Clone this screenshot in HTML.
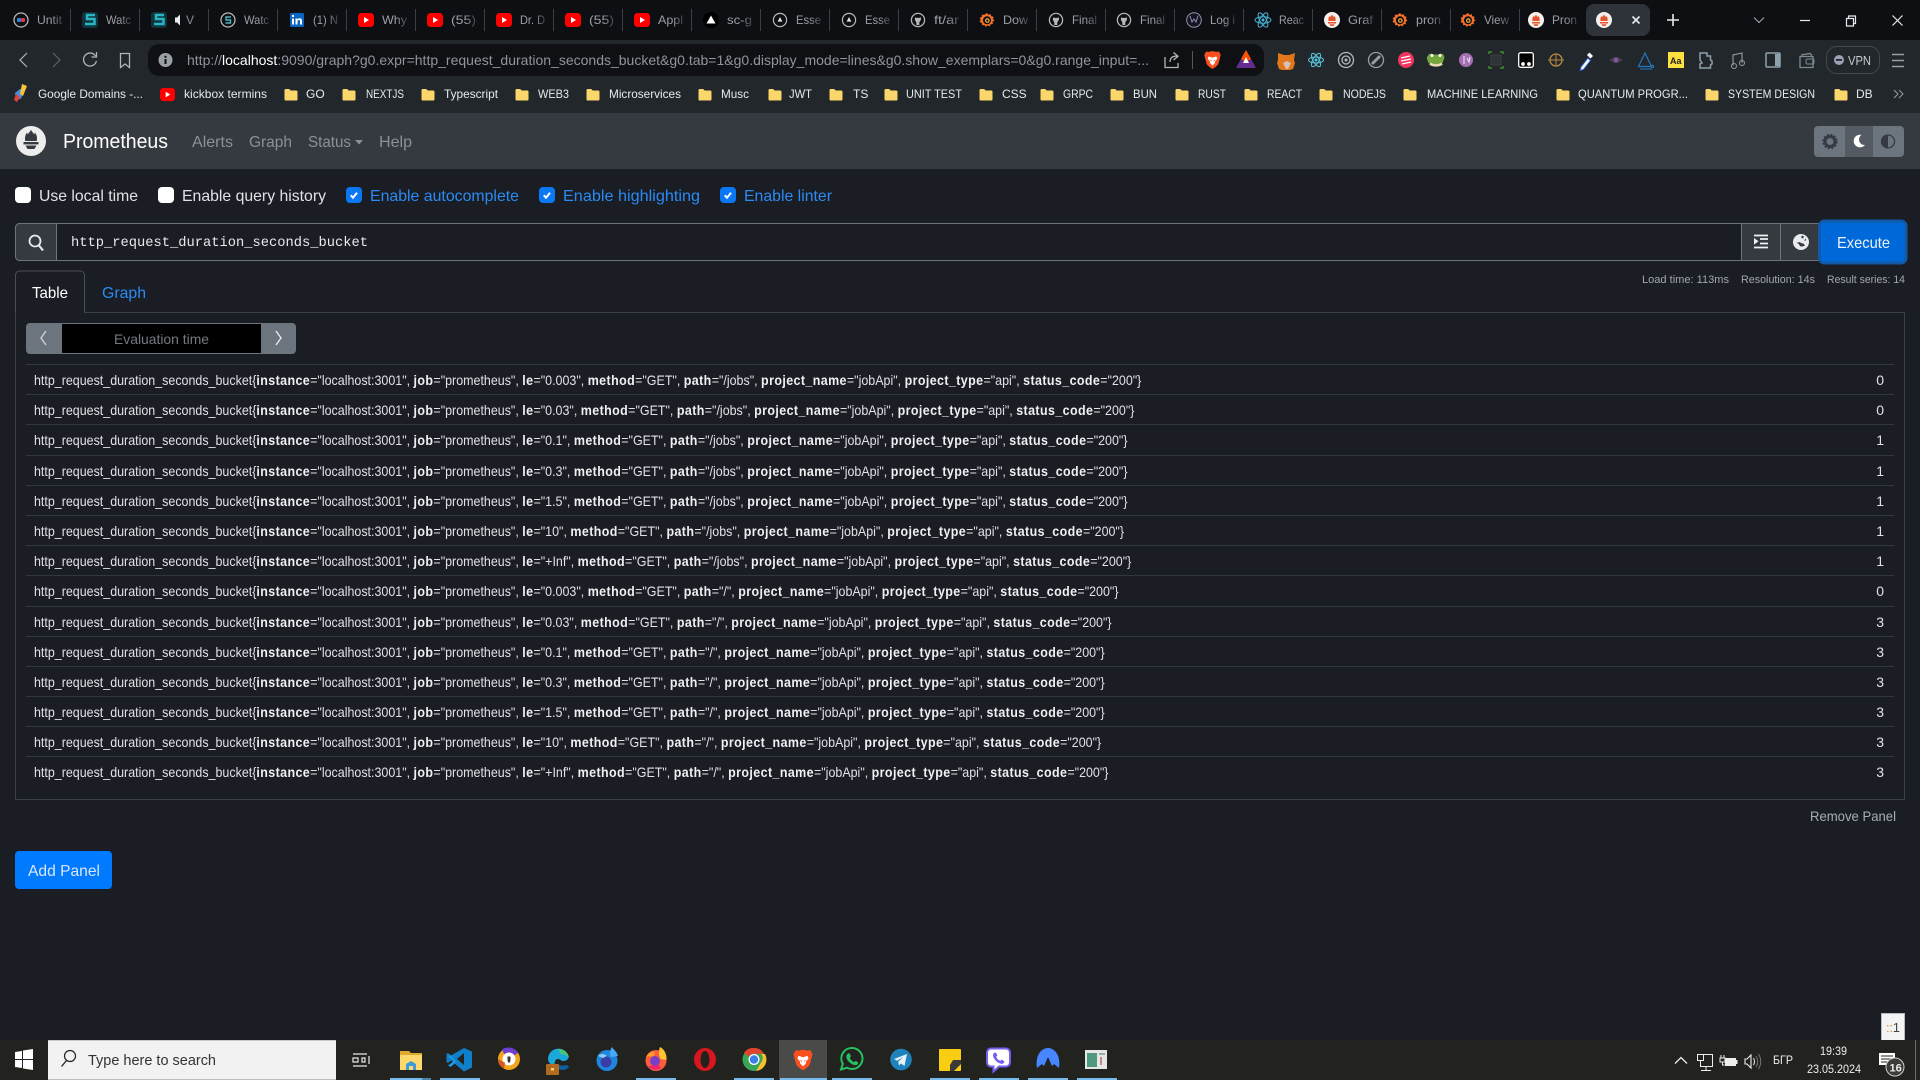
<!DOCTYPE html>
<html lang="en"><head><meta charset="utf-8"><title>Prometheus Time Series Collection and Processing Server</title>
<style>
html,body{margin:0;padding:0;background:#1a1d23;width:1920px;height:1080px;overflow:hidden;font-family:"Liberation Sans",sans-serif}
#s{position:absolute;left:0;top:0}
#rows{position:absolute;left:26px;top:364px;width:1868px;font-size:14px;color:#dfe2e6;line-height:30px}
.r{position:absolute;left:0;width:1868px;height:30px;border-top:1px solid #32373d;white-space:nowrap;box-sizing:border-box}
.r span{position:absolute;left:8px;top:0;transform:scaleX(.89);transform-origin:0 0}
.r i{position:absolute;right:10px;top:0;font-style:normal}
.r b{color:#eef0f2;letter-spacing:.45px}
text{font-family:"Liberation Sans",sans-serif}
.tab{font-size:12px;fill:url(#fade)}.bm{font-size:12px;fill:#e8eaed}
.lab{font-size:16px}.nav{font-size:16px;fill:#8d9095}
</style></head><body>
<svg id="s" width="1920" height="1080" viewBox="0 0 1920 1080" xmlns="http://www.w3.org/2000/svg">
<defs>
<linearGradient id="fade" x1="0" x2="1" y1="0" y2="0"><stop offset="0" stop-color="#9aa0a6"/><stop offset=".55" stop-color="#9aa0a6"/><stop offset="1" stop-color="#3a3d42"/></linearGradient>
<symbol id="yt" viewBox="0 0 16 16"><rect x="0" y="1" width="16" height="14" rx="3.5" fill="#f00"/><path d="M6 5l5 3-5 3z" fill="#fff"/></symbol>
<symbol id="gh" viewBox="0 0 16 16"><circle cx="8" cy="8" r="6.6" fill="none" stroke="#b5b8bb" stroke-width="1.3"/><path d="M5.2 5.2l1.3.7h3l1.3-.7.2 2.6-1.2 1.7-.5 1v2.5h-3v-2.5l-.5-1-1-1.7z" fill="#b5b8bb"/></symbol>
<symbol id="ac" viewBox="0 0 16 16"><circle cx="8" cy="8" r="6.6" fill="none" stroke="#b5b8bb" stroke-width="1.2"/><path d="M8 5l2.4 4.6H5.6z" fill="#dfe1e3"/></symbol>
<symbol id="graf" viewBox="0 0 16 16"><path d="M8 1l1.5 1.8 2.2-.7.6 2.2 2.3.4-.6 2.3L15.500 8.500l-1.900 1.300.3 2.300-2.300.2-1 2.100-2.100-1-1.800 1.500-1.300-1.900-2.300.3-.2-2.300L.5 10l1.100-2L.7 5.900l2.100-1 .1-2.300 2.300.3z" fill="#f46f2a"/><circle cx="8" cy="8.300" r="4" fill="#0d0f13"/><circle cx="8.300" cy="8.600" r="2.300" fill="#fbb03b"/><circle cx="8.300" cy="8.600" r="1.100" fill="#0d0f13"/></symbol>
<symbol id="prom" viewBox="0 0 16 16"><circle cx="8" cy="8" r="8" fill="#f5f0ec"/><path d="M8 2.200c.5 1.800 1.200 1.500 1.800 3 .4-.5.5-1 .6-1.300 1 1.300 1.600 3.200 1.100 5.100H4.500c-.5-1.900.1-3.800 1.100-5.100.1.400.3.900.6 1.300C6.800 3.700 7.500 4 8 2.200z" fill="#e6522c"/><rect x="4" y="10" width="8" height="1.500" fill="#e6522c"/><path d="M5.500 12.200h5L9.500 14h-3z" fill="#e6522c"/></symbol>
<symbol id="brave" viewBox="0 0 24 24"><path d="M12 .8l5 1 3-.6 2.400 4.400-1.100 4.300-2 7.200c-1.500 2.500-4.800 5-7.300 6.100-2.500-1.100-5.800-3.600-7.300-6.100l-2-7.200L1.600 5.600 4 1.200l3 .6z" fill="#f9501f"/><path d="M7 7.500l3 .8 2 .8 2-.8 3-.8 1 3-2.700 3.200-.3 2.300L12 19l-3-3-.3-2.300L6 10.500z" fill="#fff"/><path d="M10.500 12.500l-2-1 2 3zM13.500 12.500l2-1-2 3z" fill="#f9501f"/></symbol>
<symbol id="fold" viewBox="0 0 14 13"><path d="M.5 2.200C.5 1.400 1 1 1.700 1h3.500l1.500 1.500h5.500c.8 0 1.300.5 1.300 1.200v7.500c0 .8-.5 1.300-1.300 1.300H1.700C1 12.500.5 12 .5 11.200z" fill="#fbd66b"/></symbol>
<symbol id="chk" viewBox="0 0 16 16"><rect width="16" height="16" rx="4" fill="#0a78f5"/><path d="M4.800 8.300l2.200 2.400 4-5" stroke="#fff" stroke-width="2" fill="none"/></symbol>
</defs>

<!-- tab strip -->
<rect width="1920" height="40" fill="#0d0f13"/>
<g stroke="#3a3d42" stroke-width="1">
<path d="M70.500 9v22M139.500 9v22M208.500 9v22M277.500 9v22M346.500 9v22M415.500 9v22M484.500 9v22M553.500 9v22M622.500 9v22M691.500 9v22M760.500 9v22M829.500 9v22M898.500 9v22M967.500 9v22M1036.500 9v22M1105.500 9v22M1174.500 9v22M1243.500 9v22M1312.500 9v22M1381.500 9v22M1450.500 9v22M1519.500 9v22"/>
</g>
<circle cx="21" cy="20" r="7" fill="none" stroke="#b5b8bb" stroke-width="1.300"/><rect x="17" y="18" width="4" height="4" rx="1" fill="#2288d8"/><rect x="21" y="18" width="4" height="4" rx="1" fill="#e2334b"/>
<text class="tab" x="37" y="24" textLength="25" lengthAdjust="spacingAndGlyphs">Untit</text>
<rect x="82" y="12" width="16" height="16" rx="3" fill="#11333c"/><path d="M95 15H87v4h7.500v5H85" fill="none" stroke="#27b7c4" stroke-width="2.500"/>
<text class="tab" x="106" y="24" textLength="25" lengthAdjust="spacingAndGlyphs">Watc</text>
<rect x="151" y="12" width="16" height="16" rx="3" fill="#11333c"/><path d="M164 15h-8v4h7.500v5H154" fill="none" stroke="#27b7c4" stroke-width="2.500"/>
<path d="M175 17.500h2l3-3v11l-3-3h-2z" fill="#e8eaed"/><text x="186" y="24" font-size="12" fill="#8a8f95">V</text>
<circle cx="228" cy="20" r="7" fill="none" stroke="#b5b8bb" stroke-width="1.300"/><path d="M231 17h-5v3h4.500v3h-5" fill="none" stroke="#4ab4c2" stroke-width="1.400"/>
<text class="tab" x="244" y="24" textLength="25" lengthAdjust="spacingAndGlyphs">Watc</text>
<rect x="290" y="13" width="14" height="14" rx="1.500" fill="#0a66c2"/><path d="M292 18.500h2v6h-2zM292 15h2v2h-2zM295.500 18.500h2v1c.5-.8 1.200-1.200 2.200-1.200 1.800 0 2.300 1.200 2.300 3v3.200h-2v-3c0-.9-.2-1.500-1-1.500s-1.500.6-1.500 1.600v2.900h-2z" fill="#fff"/>
<text class="tab" x="313" y="24" textLength="25" lengthAdjust="spacingAndGlyphs">(1) N</text>
<use href="#yt" x="358" y="12" width="16" height="16"/><text class="tab" x="382" y="24" textLength="25" lengthAdjust="spacingAndGlyphs">Why</text>
<use href="#yt" x="427" y="12" width="16" height="16"/><text class="tab" x="451" y="24" textLength="25" lengthAdjust="spacingAndGlyphs">(55)</text>
<use href="#yt" x="496" y="12" width="16" height="16"/><text class="tab" x="520" y="24" textLength="25" lengthAdjust="spacingAndGlyphs">Dr. D</text>
<use href="#yt" x="565" y="12" width="16" height="16"/><text class="tab" x="589" y="24" textLength="25" lengthAdjust="spacingAndGlyphs">(55)</text>
<use href="#yt" x="634" y="12" width="16" height="16"/><text class="tab" x="658" y="24" textLength="25" lengthAdjust="spacingAndGlyphs">Appl</text>
<circle cx="711" cy="20" r="8" fill="#000"/><path d="M711 15.500l4.500 8h-9z" fill="#fff"/><text class="tab" x="727" y="24" textLength="25" lengthAdjust="spacingAndGlyphs">sc-g</text>
<use href="#ac" x="772" y="12" width="16" height="16"/><text class="tab" x="796" y="24" textLength="25" lengthAdjust="spacingAndGlyphs">Esse</text>
<use href="#ac" x="841" y="12" width="16" height="16"/><text class="tab" x="865" y="24" textLength="25" lengthAdjust="spacingAndGlyphs">Esse</text>
<use href="#gh" x="910" y="12" width="16" height="16"/><text class="tab" x="934" y="24" textLength="25" lengthAdjust="spacingAndGlyphs">ft/ar</text>
<use href="#graf" x="979" y="12" width="16" height="16"/><text class="tab" x="1003" y="24" textLength="25" lengthAdjust="spacingAndGlyphs">Dow</text>
<use href="#gh" x="1048" y="12" width="16" height="16"/><text class="tab" x="1072" y="24" textLength="25" lengthAdjust="spacingAndGlyphs">Final</text>
<use href="#gh" x="1116" y="12" width="16" height="16"/><text class="tab" x="1140" y="24" textLength="25" lengthAdjust="spacingAndGlyphs">Final</text>
<circle cx="1194" cy="20" r="7.300" fill="#141425" stroke="#8f93a8" stroke-width="1"/><path d="M1190 16l2 6 2-3 2 3 2-6" stroke="#8f93a8" fill="none"/>
<text class="tab" x="1210" y="24" textLength="25" lengthAdjust="spacingAndGlyphs">Log i</text>
<g fill="none" stroke="#4ab6d8" stroke-width="1"><ellipse cx="1263" cy="20" rx="8" ry="3.200"/><ellipse cx="1263" cy="20" rx="8" ry="3.200" transform="rotate(60 1263 20)"/><ellipse cx="1263" cy="20" rx="8" ry="3.200" transform="rotate(120 1263 20)"/></g><circle cx="1263" cy="20" r="1.500" fill="#4ab6d8"/>
<text class="tab" x="1279" y="24" textLength="25" lengthAdjust="spacingAndGlyphs">Reac</text>
<use href="#prom" x="1324" y="12" width="16" height="16"/><text class="tab" x="1348" y="24" textLength="25" lengthAdjust="spacingAndGlyphs">Graf</text>
<use href="#graf" x="1392" y="12" width="16" height="16"/><text class="tab" x="1416" y="24" textLength="25" lengthAdjust="spacingAndGlyphs">pron</text>
<use href="#graf" x="1460" y="12" width="16" height="16"/><text class="tab" x="1484" y="24" textLength="25" lengthAdjust="spacingAndGlyphs">View</text>
<use href="#prom" x="1528" y="12" width="16" height="16"/><text class="tab" x="1552" y="24" textLength="25" lengthAdjust="spacingAndGlyphs">Pron</text>
<rect x="1586" y="4" width="64" height="32" rx="8" fill="#2d3338"/>
<use href="#prom" x="1596" y="12" width="16" height="16"/>
<path d="M1632.500 16.500l7 7m0-7l-7 7" stroke="#e8eaed" stroke-width="1.600"/>
<path d="M1673 14v12M1667 20h12" stroke="#e8eaed" stroke-width="1.600"/>
<path d="M1754 17.500l5 5 5-5" stroke="#a8abaf" fill="none"/>
<path d="M1800 20.500h10" stroke="#e8eaed" stroke-width="1.200"/>
<path d="M1846.500 18.500h7v7.500h-7zM1848.500 18.500V16h7v7.500h-2" stroke="#e8eaed" fill="none" stroke-width="1.200"/>
<path d="M1892.500 15.500l10 10m0-10l-10 10" stroke="#e8eaed" stroke-width="1.200"/>

<!-- toolbar -->
<rect y="40" width="1920" height="73" fill="#22272b"/>
<rect x="148" y="44" width="1116" height="32" rx="11" fill="#0e1014"/>
<path d="M27 53l-7 7 7 7" stroke="#b2b5b8" fill="none" stroke-width="1.200"/>
<path d="M53 53l7 7-7 7" stroke="#5f6367" fill="none" stroke-width="1.200"/>
<path d="M95.500 56a6.500 6.500 0 1 0 .9 5" stroke="#b2b5b8" fill="none" stroke-width="1.300"/><path d="M96.500 52v5h-5" stroke="#b2b5b8" fill="none" stroke-width="1.300"/>
<path d="M120.500 53.500h9v14l-4.500-3.500-4.500 3.500z" stroke="#b2b5b8" fill="none" stroke-width="1.300"/>
<circle cx="165.500" cy="60" r="7" fill="#9aa0a6"/><rect x="164.500" y="59" width="2" height="5" fill="#0e1014"/><rect x="164.500" y="55.800" width="2" height="2" fill="#0e1014"/>
<text x="187" y="65" font-size="14" fill="#8f959b" textLength="962" lengthAdjust="spacingAndGlyphs">http://<tspan fill="#fff">localhost</tspan>:9090/graph?g0.expr=http_request_duration_seconds_bucket&amp;g0.tab=1&amp;g0.display_mode=lines&amp;g0.show_exemplars=0&amp;g0.range_input=...</text>
<path d="M1165 57v10.500h13V63M1170 62c0-4 2.500-6 7-6M1173.500 52.500l4.500 3.800-4.500 3.700" stroke="#b2b5b8" fill="none" stroke-width="1.300"/>
<path d="M1192.500 51v18" stroke="#55595d"/>
<use href="#brave" x="1203" y="50" width="19" height="20"/>
<path d="M1246 50l10 18h-20z" fill="#662d91"/><path d="M1246 50l5 9-5 3-5-3z" fill="#ff5000"/><path d="M1246 57l3 6h-6z" fill="#fff"/>
<!-- extensions -->
<path d="M1278 53l6 2h5l6-2-1 7 1 3-2 6-3 1h-8l-3-1-2-6 1-3z" fill="#e2761b"/><path d="M1283 63l3 6h2l3-6-4-2z" fill="#d7c1b3"/>
<rect x="1308" y="52" width="16" height="16" fill="#262a30"/><g fill="none" stroke="#58c4dc"><ellipse cx="1316" cy="60" rx="7.500" ry="3"/><ellipse cx="1316" cy="60" rx="7.500" ry="3" transform="rotate(60 1316 60)"/><ellipse cx="1316" cy="60" rx="7.500" ry="3" transform="rotate(120 1316 60)"/></g><circle cx="1316" cy="60" r="1.500" fill="#58c4dc"/>
<circle cx="1346" cy="60" r="7.500" fill="none" stroke="#b5b8bb" stroke-width="1.300"/><circle cx="1346" cy="60" r="4" fill="none" stroke="#b5b8bb" stroke-width="1.300"/><circle cx="1346" cy="60" r="1.500" fill="#b5b8bb"/>
<circle cx="1376" cy="60" r="7.500" fill="none" stroke="#9a9da0" stroke-width="1.300"/><path d="M1372 64l8-8" stroke="#9a9da0" stroke-width="3"/>
<circle cx="1406" cy="60" r="8" fill="#f1345f"/><path d="M1401 58l9-2M1401 61l10-2M1402 64l9-2" stroke="#fff" stroke-width="1.300"/>
<path d="M1428 56a3 3 0 0 1 5-1.500h6a3 3 0 0 1 5 1.500c.6 1 .4 3-.5 4l-.5 2c-2 4-13 4-15 0l-.5-2c-.9-1-1.100-3 .5-4z" fill="#74a63c"/><path d="M1430 63.500c3 2.500 9 2.500 12 0" stroke="#e9d9b5" stroke-width="2.500" fill="none"/><circle cx="1432" cy="55.500" r="1.500" fill="#fff"/><circle cx="1440" cy="55.500" r="1.500" fill="#fff"/>
<circle cx="1466" cy="60" r="7" fill="#a56fb5"/><path d="M1464 56v8M1467 58l2 4 1-5" stroke="#f3e9f6" fill="none"/>
<path d="M1489 54v-2h3M1500 52h3v2M1503 66v2h-3M1492 68h-3v-2" stroke="#3f8b2e" stroke-width="1.500" fill="none"/><rect x="1491" y="55" width="10" height="10" fill="#2e3338" stroke="#3a3f44"/>
<rect x="1518.700" y="52.700" width="14.600" height="14.600" rx="2" fill="#000" stroke="#fff" stroke-width="1.300"/><circle cx="1523" cy="64" r="1.900" fill="#fff"/><circle cx="1529" cy="64" r="1.900" fill="#fff"/>
<circle cx="1556" cy="60" r="6" fill="none" stroke="#b98a43" stroke-width="1.300"/><path d="M1548 60h16M1556 54v12" stroke="#b98a43"/>
<path d="M1581 67l7-9 2.500 2.500-7 9-3.500 1z" fill="#f8f9fa" stroke="#2a5ad0" stroke-width="1"/><path d="M1587 55l2.500-2.500 3.500 3.500-2.500 2.500z" fill="#fff"/>
<path d="M1609 60q7-6 14 0q-7 6-14 0z" fill="#3a3d42"/><circle cx="1616" cy="60" r="2.500" fill="#8c52a5"/>
<path d="M1645 53l-6.500 13.500h13z" fill="none" stroke="#2378c2" stroke-width="1.200"/><path d="M1640 69h12" stroke="#2378c2"/><circle cx="1652.500" cy="66.500" r="1.200" fill="none" stroke="#2378c2"/>
<rect x="1668" y="52" width="16" height="16" fill="#fce03c"/><text x="1670" y="64" font-size="9" font-weight="bold" fill="#222">Aa</text>
<path d="M1700 53h7v3h3.500v4l1.500 1v3l-1.500 1v3h-10.500v-4l2-1-2-3z" fill="none" stroke="#8fa1ad" stroke-width="1.500"/>
<path d="M1733 65.500V55l9-2v10" stroke="#9a9da0" stroke-width="1.100" fill="none"/><circle cx="1734" cy="66" r="2.500" fill="none" stroke="#9a9da0"/><circle cx="1742" cy="63" r="2.500" fill="none" stroke="#9a9da0"/>
<rect x="1766" y="53" width="14" height="14" rx="1" fill="none" stroke="#8fa1ad" stroke-width="1.500"/><rect x="1775" y="54" width="5" height="12" fill="#8fa1ad"/>
<path d="M1801 55l9-1.500 2 2M1800 56.500h13v11h-13z" fill="none" stroke="#7d8a93" stroke-width="1.300"/><rect x="1806" y="59" width="8" height="5" rx="1.500" fill="none" stroke="#7d8a93"/>
<rect x="1826.500" y="46.500" width="53" height="27" rx="10" fill="none" stroke="#43484d"/>
<circle cx="1839" cy="60" r="5" fill="#9ba0b3"/><rect x="1836" y="59" width="6" height="1.800" fill="#22272b"/>
<text x="1848" y="65" font-size="13" fill="#c8cbce" textLength="23" lengthAdjust="spacingAndGlyphs">VPN</text>
<path d="M1892 54.500h12M1892 60.500h12M1892 66.500h12" stroke="#9a9da0" stroke-width="1.500"/>

<!-- bookmarks -->
<path d="M15 93l5-4 5 .5-4 9-5 2z" fill="#4a8ce0"/><path d="M22 84l5 2-4 10-3-2z" fill="#f8c43a"/><path d="M16 94l4 3-3 5-3-2z" fill="#e2423a"/>
<text class="bm" x="38" y="98" textLength="105" lengthAdjust="spacingAndGlyphs">Google Domains -...</text>
<use href="#yt" x="160" y="87" width="15" height="15"/><text class="bm" x="184" y="98" textLength="83" lengthAdjust="spacingAndGlyphs">kickbox termins</text>
<use href="#fold" x="284" y="88" width="14" height="13"/><text class="bm" x="306" y="98">GO</text>
<use href="#fold" x="342" y="88" width="14" height="13"/><text class="bm" x="366" y="98" textLength="38" lengthAdjust="spacingAndGlyphs">NEXTJS</text>
<use href="#fold" x="421" y="88" width="14" height="13"/><text class="bm" x="444" y="98" textLength="54" lengthAdjust="spacingAndGlyphs">Typescript</text>
<use href="#fold" x="515" y="88" width="14" height="13"/><text class="bm" x="538" y="98" textLength="31" lengthAdjust="spacingAndGlyphs">WEB3</text>
<use href="#fold" x="586" y="88" width="14" height="13"/><text class="bm" x="609" y="98" textLength="72" lengthAdjust="spacingAndGlyphs">Microservices</text>
<use href="#fold" x="698" y="88" width="14" height="13"/><text class="bm" x="721" y="98" textLength="28" lengthAdjust="spacingAndGlyphs">Musc</text>
<use href="#fold" x="768" y="88" width="14" height="13"/><text class="bm" x="789" y="98" textLength="23" lengthAdjust="spacingAndGlyphs">JWT</text>
<use href="#fold" x="829" y="88" width="14" height="13"/><text class="bm" x="853" y="98">TS</text>
<use href="#fold" x="884" y="88" width="14" height="13"/><text class="bm" x="906" y="98" textLength="56" lengthAdjust="spacingAndGlyphs">UNIT TEST</text>
<use href="#fold" x="979" y="88" width="14" height="13"/><text class="bm" x="1002" y="98">CSS</text>
<use href="#fold" x="1040" y="88" width="14" height="13"/><text class="bm" x="1063" y="98" textLength="30" lengthAdjust="spacingAndGlyphs">GRPC</text>
<use href="#fold" x="1110" y="88" width="14" height="13"/><text class="bm" x="1133" y="98" textLength="24" lengthAdjust="spacingAndGlyphs">BUN</text>
<use href="#fold" x="1175" y="88" width="14" height="13"/><text class="bm" x="1198" y="98" textLength="28" lengthAdjust="spacingAndGlyphs">RUST</text>
<use href="#fold" x="1244" y="88" width="14" height="13"/><text class="bm" x="1267" y="98" textLength="35" lengthAdjust="spacingAndGlyphs">REACT</text>
<use href="#fold" x="1319" y="88" width="14" height="13"/><text class="bm" x="1343" y="98" textLength="43" lengthAdjust="spacingAndGlyphs">NODEJS</text>
<use href="#fold" x="1403" y="88" width="14" height="13"/><text class="bm" x="1427" y="98" textLength="111" lengthAdjust="spacingAndGlyphs">MACHINE LEARNING</text>
<use href="#fold" x="1556" y="88" width="14" height="13"/><text class="bm" x="1578" y="98" textLength="110" lengthAdjust="spacingAndGlyphs">QUANTUM PROGR...</text>
<use href="#fold" x="1705" y="88" width="14" height="13"/><text class="bm" x="1728" y="98" textLength="87" lengthAdjust="spacingAndGlyphs">SYSTEM DESIGN</text>
<use href="#fold" x="1834" y="88" width="14" height="13"/><text class="bm" x="1856" y="98">DB</text>
<path d="M1894 90l4 4-4 4M1899 90l4 4-4 4" stroke="#9a9da0" fill="none"/>

<!-- page background + nav -->
<rect y="113" width="1920" height="56" fill="#343a40"/>
<rect y="169" width="1920" height="871" fill="#1a1d23"/>
<circle cx="31" cy="141" r="15" fill="#ededed"/>
<path d="M31 129.500c.7 2.500 2.200 2.500 3 5 .6-.6.7-1.500.9-2 1.800 2 2.600 5.500 1.800 8.500H25.300c-.8-3 0-6.500 1.800-8.500.2.500.3 1.400.9 2 .8-2.500 2.300-2.500 3-5z" fill="#343a40"/><rect x="23.500" y="142" width="15" height="2.400" fill="#343a40"/><path d="M25.500 145.500h11l-2 3.500h-7z" fill="#343a40"/>
<text x="63" y="148" font-size="20" fill="#fff" textLength="105" lengthAdjust="spacingAndGlyphs">Prometheus</text>
<text class="nav" x="192" y="147" textLength="41" lengthAdjust="spacingAndGlyphs">Alerts</text>
<text class="nav" x="249" y="147" textLength="43" lengthAdjust="spacingAndGlyphs">Graph</text>
<text class="nav" x="308" y="147" textLength="43" lengthAdjust="spacingAndGlyphs">Status</text>
<path d="M355 140h8l-4 4.500z" fill="#8d9095"/>
<text class="nav" x="379" y="147" textLength="33" lengthAdjust="spacingAndGlyphs">Help</text>
<rect x="1814" y="126" width="90" height="31" rx="4" fill="#6c757d"/>
<rect x="1845" y="126" width="28" height="31" fill="#545b62"/>
<circle cx="1830" cy="141.500" r="5" fill="none" stroke="#343a40" stroke-width="3"/><circle cx="1830" cy="141.500" r="7" fill="none" stroke="#343a40" stroke-width="1.500" stroke-dasharray="2 1.700"/>
<circle cx="1860" cy="141" r="6.300" fill="#fff"/><circle cx="1864.500" cy="139.500" r="5.500" fill="#545b62"/>
<circle cx="1888" cy="141.500" r="6.500" fill="none" stroke="#343a40" stroke-width="1.300"/><path d="M1888 135a6.500 6.500 0 0 0 0 13z" fill="#343a40"/>

<!-- options -->
<rect x="15" y="187" width="16" height="16" rx="4" fill="#fff"/>
<text class="lab" x="39" y="201" fill="#dfe2e6" textLength="99" lengthAdjust="spacingAndGlyphs">Use local time</text>
<rect x="158" y="187" width="16" height="16" rx="4" fill="#fff"/>
<text class="lab" x="182" y="201" fill="#dfe2e6" textLength="144" lengthAdjust="spacingAndGlyphs">Enable query history</text>
<use href="#chk" x="346" y="187" width="16" height="16"/>
<text class="lab" x="370" y="201" fill="#2a8bf5" textLength="149" lengthAdjust="spacingAndGlyphs">Enable autocomplete</text>
<use href="#chk" x="539" y="187" width="16" height="16"/>
<text class="lab" x="563" y="201" fill="#2a8bf5" textLength="137" lengthAdjust="spacingAndGlyphs">Enable highlighting</text>
<use href="#chk" x="720" y="187" width="16" height="16"/>
<text class="lab" x="744" y="201" fill="#2a8bf5" textLength="88" lengthAdjust="spacingAndGlyphs">Enable linter</text>

<!-- query input -->
<rect x="15.500" y="223.500" width="1800" height="37" rx="4" fill="#1a1d23" stroke="#6c757d"/>
<path d="M15.500 227.500a4 4 0 0 1 4-4h37v37h-37a4 4 0 0 1-4-4z" fill="#343a40" stroke="#6c757d"/>
<circle cx="35" cy="241" r="5.500" fill="none" stroke="#e8eaed" stroke-width="1.800"/><path d="M39 245.500l4 5" stroke="#e8eaed" stroke-width="2.200"/>
<text x="71" y="246" font-size="13.750" fill="#e8eaed" style="font-family:'Liberation Mono',monospace">http_request_duration_seconds_bucket</text>
<rect x="1741.500" y="223.500" width="39" height="37" fill="#343a40" stroke="#6c757d"/>
<rect x="1780.500" y="223.500" width="40" height="37" fill="#343a40" stroke="#6c757d"/>
<path d="M1754 235.500h14M1760 239h8M1760 243.500h8M1754 247.500h14" stroke="#f1f2f3" stroke-width="1.800"/><path d="M1754 238l4.500 3.300-4.500 3.300z" fill="#f1f2f3"/>
<circle cx="1801" cy="242" r="8" fill="#e8eaed"/><path d="M1796 243c2 0 3 1 4 3 1 1 3 .5 5-.5l-1.500-2c-2 0-3-.5-3.500-1.500zM1802 235.500l2 1-1 2-2-1zM1806 238.500v2h-2z" fill="#343a40"/>
<rect x="1819.500" y="221" width="86.500" height="42" rx="5" fill="#0069d9" stroke="#125aa8" stroke-width="3"/>
<text x="1837" y="248" font-size="16" fill="#ecf2fb" textLength="53" lengthAdjust="spacingAndGlyphs">Execute</text>

<!-- stats -->
<g font-size="11.200" fill="#a3a8ae"><text x="1642" y="283" textLength="87" lengthAdjust="spacingAndGlyphs">Load time: 113ms</text><text x="1741" y="283" textLength="74" lengthAdjust="spacingAndGlyphs">Resolution: 14s</text><text x="1827" y="283" textLength="78" lengthAdjust="spacingAndGlyphs">Result series: 14</text></g>

<!-- tabs + panel -->
<path d="M15.500 799.500V312.500h1889v487z" fill="none" stroke="#3a3f45"/>
<path d="M15.500 313v-38a4 4 0 0 1 4-4h61a4 4 0 0 1 4 4v37.500" fill="#1a1d23" stroke="#4a4f55"/>
<rect x="16" y="311" width="68" height="3" fill="#1a1d23"/>
<text x="32" y="298" font-size="16" fill="#fff" textLength="36" lengthAdjust="spacingAndGlyphs">Table</text>
<text x="102" y="298" font-size="16" fill="#2a8bf5" textLength="44" lengthAdjust="spacingAndGlyphs">Graph</text>
<rect x="26" y="323" width="270" height="31" rx="4" fill="#6c757d"/>
<rect x="62" y="324" width="199" height="29" fill="#000"/>
<path d="M46 331l-5 7 5 7" stroke="#cdd1d5" fill="none" stroke-width="1.400"/>
<path d="M276 331l5 7-5 7" stroke="#e8eaed" fill="none" stroke-width="1.400"/>
<text x="114" y="344" font-size="14" fill="#727a82" textLength="95" lengthAdjust="spacingAndGlyphs">Evaluation time</text>

<!-- bottom -->
<text x="1810" y="821" font-size="14" fill="#a6aeb8" textLength="86" lengthAdjust="spacingAndGlyphs">Remove Panel</text>
<rect x="15" y="851" width="97" height="38" rx="4" fill="#007bff"/>
<text x="28" y="876" font-size="16" fill="#dbe6fb" textLength="72" lengthAdjust="spacingAndGlyphs">Add Panel</text>
<rect x="1881.500" y="1013.500" width="23" height="27" fill="#f4f4f4" stroke="#b8babc"/>
<text x="1886" y="1032" font-size="13" fill="#666" textLength="14"><tspan fill="#d98a2b">::</tspan><tspan fill="#444">1</tspan></text>

<!-- taskbar -->
<rect y="1040" width="1920" height="40" fill="#22221f"/>
<path d="M15 1052l7-1v8h-7zM23 1050.500l10-1.500v10H23zM15 1060h7v8l-7-1zM23 1060h10v10l-10-1.500z" fill="#fff"/>
<rect x="48" y="1040" width="288" height="40" fill="#f2f2f2"/><rect x="48" y="1040" width="288" height="1" fill="#c8c8c8"/><rect x="48" y="1079" width="288" height="1" fill="#bdbdbd"/>
<circle cx="70" cy="1056" r="5.500" fill="none" stroke="#222" stroke-width="1.200"/><path d="M66.500 1060.500l-5 6" stroke="#222" stroke-width="1.300"/>
<text x="88" y="1065" font-size="14.500" fill="#333" textLength="128" lengthAdjust="spacingAndGlyphs">Type here to search</text>
<path d="M353 1054h14M353 1066h14M353 1058h5v4h-5zM362 1058h3v4h-3zM369 1056v8" stroke="#e8e8e8" fill="none" stroke-width="1.200"/>
<rect x="779" y="1040" width="48" height="40" fill="#4a4a48"/>
<g fill="#76b9ed"><rect x="390" y="1078" width="32" height="2"/><rect x="422" y="1078" width="9" height="2" fill="#4d82ad"/><rect x="440" y="1078" width="40" height="2"/><rect x="636" y="1078" width="40" height="2"/><rect x="734" y="1078" width="40" height="2"/><rect x="780" y="1078" width="47" height="2"/><rect x="832" y="1078" width="40" height="2"/><rect x="930" y="1078" width="40" height="2"/><rect x="979" y="1078" width="40" height="2"/><rect x="1028" y="1078" width="40" height="2"/><rect x="1077" y="1078" width="40" height="2"/></g>
<!-- explorer -->
<path d="M400 1051h9l2 2h11v16h-22z" fill="#e0a92f"/><rect x="400" y="1055" width="22" height="15" fill="#fcd86d"/><path d="M406 1070v-6l5-3 5 3v6h-3v-4h-4v4z" fill="#3f9ad9"/>
<!-- vscode -->
<path d="M464 1048l8 3.500v16l-8 4-13-11-3 2.500-1.500-1v-8l1.500-1 3 2.500z" fill="#0f7fc9"/><path d="M464 1053l-7 6 7 6z" fill="#22221f"/><path d="M450.500 1055l-2.500 1.500 6 4.500-6 4.500 2.500 1.500 6-5z" fill="#1a9ae0"/>
<!-- avast -->
<circle cx="509" cy="1059" r="11" fill="#f1a51a"/><path d="M509 1048a11 11 0 0 1 9 5l-9 6z" fill="#6d3fd1"/><path d="M502 1049.500a11 11 0 0 1 14 1l-3 5h-8z" fill="#6d3fd1"/><circle cx="509" cy="1059" r="6.500" fill="#fff"/><path d="M507.500 1056.500h3v3l-.5 3h-2l-.5-3z" fill="#333"/><path d="M498 1059a11 11 0 0 0 6 9.800l1-6z" fill="#d35b22"/>
<!-- edge -->
<path d="M548 1059a10.500 10.500 0 0 1 20.500-3c.4 3-2 5-5 5s-3-2-5.500-2-4 3-3 7c-4-1-7-3.500-7-7z" fill="#1ba8d8"/><path d="M558 1049a10 10 0 0 1 11 9c-2-3-6-4-8-3.500z" fill="#49c47c"/><path d="M556 1064c0 3 3 6 6 6s5-1 7-3l-2-2c-4 1-6 1-11-1z" fill="#0f5fa8"/><rect x="546" y="1064" width="13" height="11" rx="1" fill="#b26a1e"/><rect x="551" y="1068" width="3" height="2.500" fill="#f5d27a"/>
<!-- FF dev -->
<circle cx="607" cy="1060.500" r="10.500" fill="#1f86e0"/><path d="M612 1047c2 3 5 5 6 9l-7 1c-2-3-1-7 1-10z" fill="#47a8f4"/><circle cx="606" cy="1062" r="5.500" fill="#3a3ca8"/><path d="M598 1056c3-3 6-2 8-1s-3 3-3 3z" fill="#8ecbf7"/>
<!-- firefox -->
<circle cx="656" cy="1060.500" r="10.500" fill="#ff5d3a"/><path d="M660 1047c4 2 7 7 6.500 13l-6-1c-2-4-2-8-.5-12z" fill="#ffc233"/><path d="M646 1057c2-4 6-6 9-5l-1 4z" fill="#ff9a2e"/><circle cx="655" cy="1061" r="5" fill="#7a3fc8"/><path d="M648 1066c3 4 9 5 13 2l-2-3z" fill="#e8266e"/>
<!-- opera -->
<ellipse cx="705" cy="1059.500" rx="11" ry="11.500" fill="#d9161f"/><ellipse cx="705" cy="1059.500" rx="4.500" ry="8.500" fill="#22221f"/>
<!-- chrome -->
<circle cx="754" cy="1059.500" r="11.500" fill="#3aa655"/><path d="M754 1048a11.500 11.500 0 0 1 10 5.700h-10a6 6 0 0 0-5.300 3l-4.700-4a11.500 11.500 0 0 1 10-4.700z" fill="#e1432f"/><path d="M765 1054a11.500 11.500 0 0 1-9 17l5-8.500a6 6 0 0 0 0-8.500z" fill="#f6c12d"/><circle cx="754" cy="1059.500" r="5.500" fill="#fff"/><circle cx="754" cy="1059.500" r="4.200" fill="#3d7fe8"/>
<use href="#brave" x="792" y="1048" width="22" height="24"/>
<!-- whatsapp -->
<path d="M852 1048a10.500 10.500 0 0 1 0 21c-1.800 0-3.500-.4-5-1.300l-6 1.800 1.800-5.600a10.500 10.500 0 0 1 9.200-15.900z" fill="none" stroke="#25c263" stroke-width="2"/><path d="M847.500 1054c1-1.200 2-.8 2.400 0l1 2c0 .8-1 1.200-1 2 .6 1.600 2.500 3.500 4 4 .9 0 1.300-1 2-1l2 1.200c.5.800.2 2-1 2.600-2 1-5.500-.3-8-3s-3.500-5.800-1.400-7.800z" fill="#25c263"/>
<!-- telegram -->
<circle cx="901" cy="1059.500" r="10.800" fill="#1e83bd"/><path d="M894 1059l13-5-2.500 12-3.500-2.500-2 2-.8-3.800 5-4.700-6 3.700z" fill="#e6f2f8"/>
<!-- notes -->
<rect x="939" y="1049" width="22" height="22" rx="1" fill="#f9ce12"/><path d="M950 1071v-6l3-5h8v4l-7 7z" fill="#3a3a36"/>
<!-- viber -->
<path d="M991 1048.500h15a4 4 0 0 1 4 4v10a4 4 0 0 1-4 4h-7l-5.500 5v-5h-2.500a4 4 0 0 1-4-4v-10a4 4 0 0 1 4-4z" fill="#fff" stroke="#7360f2" stroke-width="2"/><path d="M994 1053c1-1 2-.5 2.500.5l.8 1.700c0 .8-1 1-1 1.800.7 1.800 2 3 3.800 3.800.8 0 1-1 1.800-1l1.800 1c.8.600.8 1.500-.2 2.500-2 1.500-6-.5-8-3s-3.500-5-1.500-7.300z" fill="#7360f2"/>
<!-- nord -->
<path d="M1037 1068C1035 1056 1041 1048 1048 1048S1061 1056 1059 1068L1054 1064 1052 1066 1048 1057 1044 1066 1042 1064Z" fill="#4687ff"/>
<!-- last -->
<rect x="1085" y="1050" width="22" height="19" fill="#e5e6e5"/><rect x="1087" y="1053" width="10" height="14" fill="#4d9a7e"/><rect x="1099" y="1053" width="6" height="2" fill="#9aa"/><rect x="1100" y="1057" width="2" height="8" fill="#c88"/>

<!-- tray -->
<path d="M1675 1063.500l6-6 6 6" fill="none" stroke="#eee" stroke-width="1.300"/>
<path d="M1700.500 1054.500h12v12h-12zM1706 1066.500v4M1701 1070.500h10" fill="none" stroke="#eee"/><rect x="1697.500" y="1054.500" width="6" height="6" fill="#22221f" stroke="#eee"/>
<rect x="1725" y="1058" width="11" height="8" fill="#eee"/><rect x="1736" y="1060" width="1.500" height="4" fill="#eee"/><path d="M1721 1055v3M1724 1055v3M1720 1058h5v4h-5zM1722.500 1062v3h2" stroke="#eee" fill="none"/>
<path d="M1745 1059h2l4-4v13l-4-4h-2z" fill="none" stroke="#eee" stroke-width="1.100"/><path d="M1753.500 1058q2 3.500 0 7" stroke="#eee" fill="none"/><path d="M1756 1056q3.500 5.500 0 11M1758.500 1054q4.500 7.500 0 15" stroke="#777" fill="none"/>
<text x="1773" y="1064" font-size="12" fill="#eee" textLength="20" lengthAdjust="spacingAndGlyphs">БГР</text>
<text x="1820" y="1055" font-size="12" fill="#eee" textLength="27" lengthAdjust="spacingAndGlyphs">19:39</text>
<text x="1807" y="1073" font-size="12" fill="#eee" textLength="54" lengthAdjust="spacingAndGlyphs">23.05.2024</text>
<rect x="1879" y="1053" width="16" height="12" fill="#fff"/><path d="M1881 1056h12M1881 1059h12M1881 1062h8" stroke="#22221f"/>
<circle cx="1895" cy="1067" r="9" fill="#3c3c3a" stroke="#cfcfcf"/><text x="1889.500" y="1071.500" font-size="11" font-weight="bold" fill="#eee">16</text>
<path d="M1915.500 1040v40" stroke="#6d6d6b"/>
</svg>

<div id="rows">
<div class="r" style="top:0"><span>http_request_duration_seconds_bucket{<b>instance</b>="localhost:3001", <b>job</b>="prometheus", <b>le</b>="0.003", <b>method</b>="GET", <b>path</b>="/jobs", <b>project_name</b>="jobApi", <b>project_type</b>="api", <b>status_code</b>="200"}</span><i>0</i></div>
<div class="r" style="top:30px"><span>http_request_duration_seconds_bucket{<b>instance</b>="localhost:3001", <b>job</b>="prometheus", <b>le</b>="0.03", <b>method</b>="GET", <b>path</b>="/jobs", <b>project_name</b>="jobApi", <b>project_type</b>="api", <b>status_code</b>="200"}</span><i>0</i></div>
<div class="r" style="top:60px"><span>http_request_duration_seconds_bucket{<b>instance</b>="localhost:3001", <b>job</b>="prometheus", <b>le</b>="0.1", <b>method</b>="GET", <b>path</b>="/jobs", <b>project_name</b>="jobApi", <b>project_type</b>="api", <b>status_code</b>="200"}</span><i>1</i></div>
<div class="r" style="top:91px"><span>http_request_duration_seconds_bucket{<b>instance</b>="localhost:3001", <b>job</b>="prometheus", <b>le</b>="0.3", <b>method</b>="GET", <b>path</b>="/jobs", <b>project_name</b>="jobApi", <b>project_type</b>="api", <b>status_code</b>="200"}</span><i>1</i></div>
<div class="r" style="top:121px"><span>http_request_duration_seconds_bucket{<b>instance</b>="localhost:3001", <b>job</b>="prometheus", <b>le</b>="1.5", <b>method</b>="GET", <b>path</b>="/jobs", <b>project_name</b>="jobApi", <b>project_type</b>="api", <b>status_code</b>="200"}</span><i>1</i></div>
<div class="r" style="top:151px"><span>http_request_duration_seconds_bucket{<b>instance</b>="localhost:3001", <b>job</b>="prometheus", <b>le</b>="10", <b>method</b>="GET", <b>path</b>="/jobs", <b>project_name</b>="jobApi", <b>project_type</b>="api", <b>status_code</b>="200"}</span><i>1</i></div>
<div class="r" style="top:181px"><span>http_request_duration_seconds_bucket{<b>instance</b>="localhost:3001", <b>job</b>="prometheus", <b>le</b>="+Inf", <b>method</b>="GET", <b>path</b>="/jobs", <b>project_name</b>="jobApi", <b>project_type</b>="api", <b>status_code</b>="200"}</span><i>1</i></div>
<div class="r" style="top:211px"><span>http_request_duration_seconds_bucket{<b>instance</b>="localhost:3001", <b>job</b>="prometheus", <b>le</b>="0.003", <b>method</b>="GET", <b>path</b>="/", <b>project_name</b>="jobApi", <b>project_type</b>="api", <b>status_code</b>="200"}</span><i>0</i></div>
<div class="r" style="top:242px"><span>http_request_duration_seconds_bucket{<b>instance</b>="localhost:3001", <b>job</b>="prometheus", <b>le</b>="0.03", <b>method</b>="GET", <b>path</b>="/", <b>project_name</b>="jobApi", <b>project_type</b>="api", <b>status_code</b>="200"}</span><i>3</i></div>
<div class="r" style="top:272px"><span>http_request_duration_seconds_bucket{<b>instance</b>="localhost:3001", <b>job</b>="prometheus", <b>le</b>="0.1", <b>method</b>="GET", <b>path</b>="/", <b>project_name</b>="jobApi", <b>project_type</b>="api", <b>status_code</b>="200"}</span><i>3</i></div>
<div class="r" style="top:302px"><span>http_request_duration_seconds_bucket{<b>instance</b>="localhost:3001", <b>job</b>="prometheus", <b>le</b>="0.3", <b>method</b>="GET", <b>path</b>="/", <b>project_name</b>="jobApi", <b>project_type</b>="api", <b>status_code</b>="200"}</span><i>3</i></div>
<div class="r" style="top:332px"><span>http_request_duration_seconds_bucket{<b>instance</b>="localhost:3001", <b>job</b>="prometheus", <b>le</b>="1.5", <b>method</b>="GET", <b>path</b>="/", <b>project_name</b>="jobApi", <b>project_type</b>="api", <b>status_code</b>="200"}</span><i>3</i></div>
<div class="r" style="top:362px"><span>http_request_duration_seconds_bucket{<b>instance</b>="localhost:3001", <b>job</b>="prometheus", <b>le</b>="10", <b>method</b>="GET", <b>path</b>="/", <b>project_name</b>="jobApi", <b>project_type</b>="api", <b>status_code</b>="200"}</span><i>3</i></div>
<div class="r" style="top:392px"><span>http_request_duration_seconds_bucket{<b>instance</b>="localhost:3001", <b>job</b>="prometheus", <b>le</b>="+Inf", <b>method</b>="GET", <b>path</b>="/", <b>project_name</b>="jobApi", <b>project_type</b>="api", <b>status_code</b>="200"}</span><i>3</i></div>
</div>
</body></html>
